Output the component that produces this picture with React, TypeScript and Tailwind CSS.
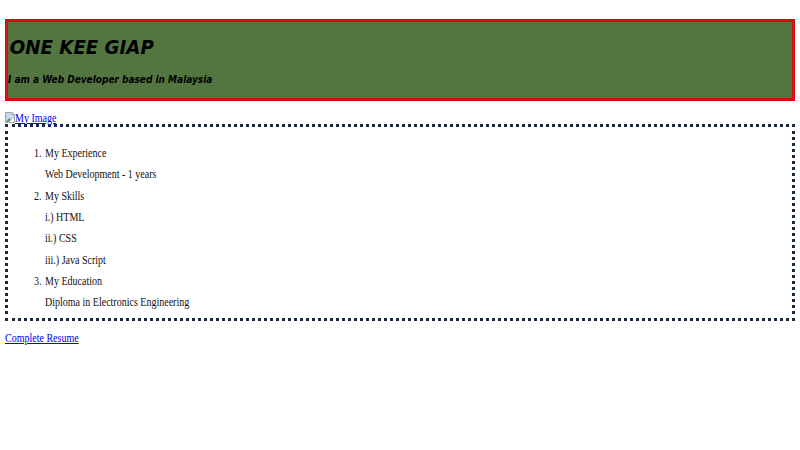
function BrokenImage() {
  return (
    <svg width="10" height="11" viewBox="0 0 10 11" className="inline-block align-[-1px]">
      <path d="M0.5 0.5H7.5L9.5 2.5V10.5H0.5Z" fill="#fff" stroke="#a0a0a0" />
      <path d="M1 1H7V3H9V6L5 10H1Z" fill="#c3d9f5" />
      <path d="M1 10L4 6L6 8L3 10Z" fill="#5fa04e" />
      <path d="M7 0.5V2.5H9.5" fill="#fff" stroke="#a0a0a0" />
    </svg>
  );
}

export default function App() {
  const rows = [
    { n: "1.", text: "My Experience" },
    { text: "Web Development - 1 years" },
    { n: "2.", text: "My Skills" },
    { text: "i.) HTML" },
    { text: "ii.) CSS" },
    { text: "iii.) Java Script" },
    { n: "3.", text: "My Education" },
    { text: "Diploma in Electronics Engineering" },
  ];

  return (
    <div className="min-h-[450px] overflow-hidden bg-white px-[5px] pt-[19px] font-['Liberation_Serif',serif] text-[11.5px] text-[#111]">
      <header className="h-[82px] border-[3px] border-[#d90f0f] bg-[#537540] font-['DejaVu_Sans',sans-serif] text-black italic">
        <h1 className="origin-left scale-x-[.91] pl-[2px] pt-[13px] text-[20px] leading-[24px] font-bold whitespace-nowrap">ONE KEE GIAP</h1>
        <h3 className="origin-left scale-x-[.917] pt-[15px] text-[9.8px] leading-[12px] font-bold whitespace-nowrap">I am a Web Developer based in Malaysia</h3>
      </header>

      <a href="#" className="mt-[10px] flex h-[13px] items-center leading-[12px] text-[#0000ee]">
        <BrokenImage />
        <span className="inline-block origin-left scale-x-[.87] underline">My Image</span>
      </a>

      <main className="border-[3px] border-dotted border-[#1b2a41] pt-[20px] pb-[0.4px] pl-[37px]">
        {rows.map((row) => (
          <div key={row.text} className="relative h-[21.33px] origin-left scale-x-[.87] leading-[12px]">
            {row.n && <span className="absolute right-full mr-[4px] whitespace-nowrap">{row.n}</span>}
            {row.text}
          </div>
        ))}
      </main>

      <a href="#" className="mt-[11px] block origin-left scale-x-[.87] leading-[12px] text-[#0000ee] underline">
        Complete Resume
      </a>
    </div>
  );
}
